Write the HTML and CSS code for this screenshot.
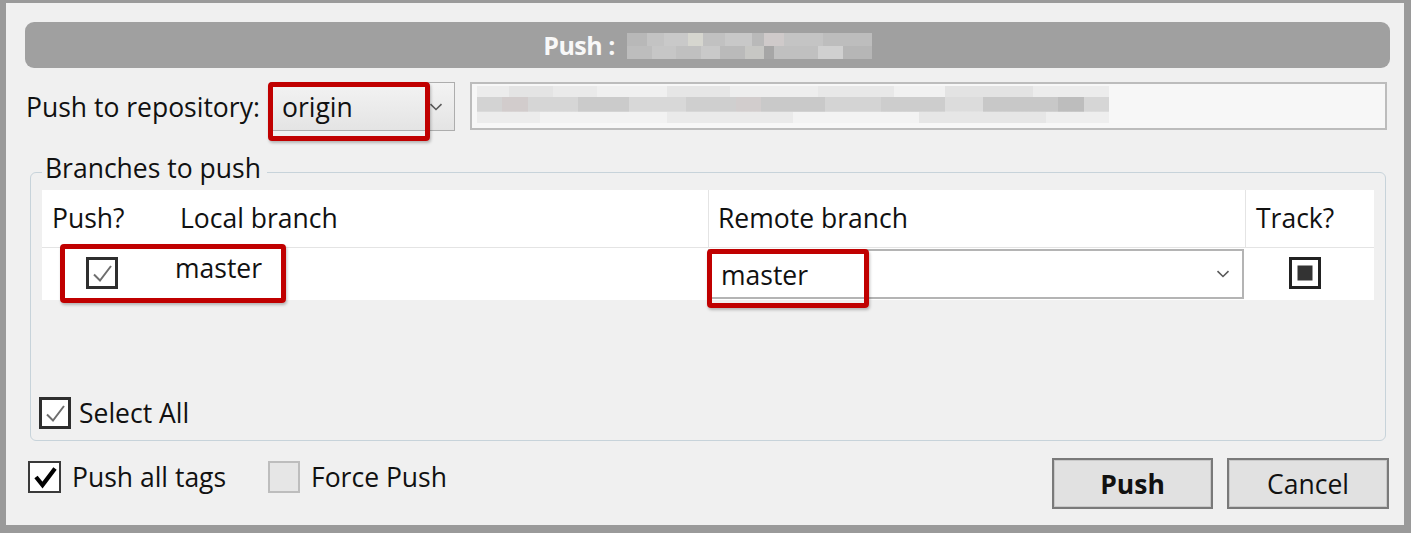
FILE: index.html
```html
<!DOCTYPE html>
<html>
<head>
<meta charset="utf-8">
<title>Push</title>
<link rel="stylesheet" href="styles.css">
</head>
<body>
<div class="window">
  <div class="titlebar">
    <span class="title">Push :</span>
    <span class="blur title-blur"></span>
  </div>

  <div class="repo-row">
    <span class="repo-label">Push to repository:</span>
    <div class="combo repo-combo">
      <span class="combo-text">origin</span>
      <svg class="chevron" width="14" height="8" viewBox="0 0 14 8"><path d="M1.5 1.2 L7 6.5 L12.5 1.2" fill="none" stroke="#5a5a5a" stroke-width="1.6"/></svg>
      <span class="hl hl-repo"></span>
    </div>
    <div class="url-box"><span class="blur url-blur"></span></div>
  </div>

  <fieldset class="group">
    <legend class="group-legend">Branches to push</legend>
    <div class="grid-area">
      <div class="grid grid-head">
        <div class="hcell hc-push">Push?</div>
        <div class="hcell hc-local">Local branch</div>
        <div class="hcell hc-remote">Remote branch</div>
        <div class="hcell hc-track">Track?</div>
      </div>
      <div class="grid grid-row">
        <div class="cell c-push">
          <svg class="cb" width="32" height="32" viewBox="0 0 32 32"><rect x="1.5" y="1.5" width="29" height="29" fill="#fff" stroke="#2e2e2e" stroke-width="3"/><path d="M8 17.5 L14 23.5 L25 9" fill="none" stroke="#6e6e6e" stroke-width="2"/></svg>
        </div>
        <div class="cell c-local">master</div>
        <div class="cell c-remote">
          <div class="remote-combo">
            <span class="combo-text">master</span>
            <svg class="chevron" width="14" height="8" viewBox="0 0 14 8"><path d="M1.5 1.2 L7 6.5 L12.5 1.2" fill="none" stroke="#5a5a5a" stroke-width="1.6"/></svg>
            <span class="hl hl-remote"></span>
          </div>
        </div>
        <div class="cell c-track">
          <svg class="cb" width="32" height="32" viewBox="0 0 32 32"><rect x="1.5" y="1.5" width="29" height="29" fill="#fff" stroke="#222" stroke-width="3"/><rect x="8.5" y="8.5" width="15" height="15" fill="#333"/></svg>
        </div>
        <span class="hl hl-local"></span>
      </div>
    </div>
    <div class="check select-all">
      <svg class="cb" width="32" height="32" viewBox="0 0 32 32"><rect x="1.5" y="1.5" width="29" height="29" fill="#fff" stroke="#2e2e2e" stroke-width="3"/><path d="M8 17.5 L14 23.5 L25 9" fill="none" stroke="#6e6e6e" stroke-width="2"/></svg>
      <span class="check-label">Select All</span>
    </div>
  </fieldset>

  <div class="bottom">
    <div class="options">
      <div class="check opt-tags">
        <svg class="cb" width="33" height="32" viewBox="0 0 33 32"><rect x="1" y="1" width="31" height="30" fill="#fff" stroke="#3a3a3a" stroke-width="2"/><path d="M8 16 L14.5 24 L27 7.5" fill="none" stroke="#000" stroke-width="4.2"/></svg>
        <span class="check-label">Push all tags</span>
      </div>
      <div class="check opt-force">
        <svg class="cb" width="32" height="32" viewBox="0 0 32 32"><rect x="1" y="1" width="30" height="30" fill="#e6e6e6" stroke="#bdbdbd" stroke-width="2"/></svg>
        <span class="check-label">Force Push</span>
      </div>
    </div>
    <div class="buttons">
      <button class="btn btn-push">Push</button>
      <button class="btn btn-cancel">Cancel</button>
    </div>
  </div>
</div>
</body>
</html>
```

FILE: styles.css
```css
html, body {
  margin: 0;
  padding: 0;
  background: #f0f0f0;
}

body {
  font-family: "Open Sans", "Noto Sans", sans-serif;
  font-size: 26.5px;
  color: #111111;
}

.window {
  width: 1411px;
  height: 533px;
  box-sizing: border-box;
  background: #f0f0f0;
  border-style: solid;
  border-color: #9a9a9a;
  border-width: 3px 7px 8px 6px;
  display: flex;
  flex-direction: column;
}

/* title bar */
.titlebar {
  margin: 19px 14px 0 19px;
  height: 46px;
  border-radius: 9px;
  background: #a0a0a0;
  display: flex;
  justify-content: center;
  align-items: center;
  gap: 12px;
}

.title {
  color: #f8f8f8;
  font-weight: 700;
  font-size: 25px;
  line-height: 30px;
  letter-spacing: -0.5px;
}

.blur {
  display: block;
}

.title-blur {
  width: 245px;
  height: 26px;
  margin-top: 2px;
  background:
    linear-gradient(90deg, #b8b8b8 0 8%, #c3c3c3 8% 15%, #c9c9c9 15% 25%, #d6d6cf 25% 31%, #c1c1c1 31% 40%, #c8c8c8 40% 51%, #b9b9b9 51% 56%, #cfcaca 56% 64%, #c4c4c4 64% 80%, #bdbdbd 80% 100%) top / 100% 50% no-repeat,
    linear-gradient(90deg, #bdbdbd 0 10%, #c6c6c6 10% 20%, #c0c0c0 20% 30%, #c9c9c9 30% 38%, #bababa 38% 48%, #c7c7c4 48% 56%, #a6a6a6 56% 60%, #c0c0c0 60% 78%, #d0d0d0 78% 88%, #b6b6b6 88% 100%) bottom / 100% 50% no-repeat;
}

/* repository row */
.repo-row {
  margin: 14px 17px 0 20px;
  height: 50px;
  display: flex;
  align-items: flex-start;
}

.repo-label {
  flex: 0 0 244px;
  line-height: 50px;
  white-space: nowrap;
}

.combo {
  position: relative;
  box-sizing: border-box;
  height: 49px;
  border: 1px solid #adadad;
  background: linear-gradient(#f3f3f3, #e4e4e4);
  display: flex;
  align-items: center;
}

.repo-combo {
  flex: 0 0 185px;
  margin-right: 15px;
}

.combo-text {
  padding-left: 11px;
  line-height: 30px;
  flex: 1;
}

.chevron {
  display: block;
  margin-right: 11px;
}

.url-box {
  flex: 1;
  box-sizing: border-box;
  height: 48px;
  border: 2px solid #bcbcbc;
  background: #f7f7f7;
  padding: 2px 0 0 5px;
}

.url-blur {
  width: 632px;
  height: 37px;
  background:
    linear-gradient(90deg, #ececec 0 5%, #e4e4e4 5% 12%, #eaeaea 12% 19%, #f0f0f0 19% 30%, #e6e6e6 30% 40%, #eeeeee 40% 54%, #e8e8e8 54% 66%, #f1f1f1 66% 74%, #e3e3e3 74% 88%, #ececec 88% 100%) top / 100% 30% no-repeat,
    linear-gradient(90deg, #d3d3d3 0 4%, #d2cccc 4% 8%, #d6d6d6 8% 16%, #cbcbcb 16% 24%, #d8d8d8 24% 33%, #cfcfcf 33% 41%, #d2cdcd 41% 45%, #c9c9c9 45% 55%, #d4d4d4 55% 64%, #cdcdcd 64% 74%, #dcdcdc 74% 80%, #c8c8c8 80% 92%, #bdbdbd 92% 96%, #d6d6d6 96% 100%) center / 100% 40% no-repeat,
    linear-gradient(90deg, #ececec 0 10%, #f2f2f2 10% 30%, #eaeaea 30% 50%, #f3f3f3 50% 70%, #e6e6e6 70% 90%, #eeeeee 90% 100%) bottom / 100% 30% no-repeat;
}

/* red highlight frames */
.hl {
  position: absolute;
  box-sizing: border-box;
  border: 5px solid #c00000;
  border-radius: 4px;
  box-shadow: 1px 2px 3px rgba(0, 0, 0, 0.25);
  pointer-events: none;
}

.hl-repo {
  left: -3px;
  top: -1px;
  width: 162px;
  height: 59px;
}

.hl-local {
  left: 18px;
  top: -4px;
  width: 226px;
  height: 59px;
}

.hl-remote {
  left: -3px;
  top: -2px;
  width: 162px;
  height: 59px;
}

/* group box */
.group {
  margin: 22px 18px 0 24px;
  padding: 0 11px 11px 11px;
  border: 1px solid #c7d3da;
  border-radius: 6px;
  min-width: 0;
}

.group-legend {
  padding: 0 6px 8px 3px;
  line-height: 28px;
}

.grid-area {
  height: 207px;
}

.grid {
  display: grid;
  grid-template-columns: 123px 543px 537px 1fr;
  background: #ffffff;
}

.grid-head {
  border-bottom: 1px solid #e4e4e4;
  box-sizing: border-box;
  height: 58px;
}

.hcell {
  display: flex;
  align-items: center;
  line-height: 30px;
  padding-bottom: 2px;
}

.hc-push { padding-left: 10px; }
.hc-local { padding-left: 15px; }
.hc-remote { padding-left: 9px; border-left: 1px solid #e4e4e4; }
.hc-track { padding-left: 10px; border-left: 1px solid #e4e4e4; }

.grid-row {
  position: relative;
  height: 52px;
}

.cell {
  box-sizing: border-box;
}

.cb {
  display: block;
  flex: none;
}

.c-push {
  padding: 9px 0 0 44px;
}

.c-local {
  padding: 5px 0 0 10px;
  line-height: 30px;
}

.c-remote {
  padding-top: 1px;
}

.remote-combo {
  position: relative;
  box-sizing: border-box;
  height: 50px;
  width: 536px;
  border: 2px solid #b4b4b4;
  background: #ffffff;
  display: flex;
  align-items: center;
}

.remote-combo .combo-text {
  padding-left: 11px;
  padding-top: 2px;
}

.remote-combo .chevron {
  margin-right: 12px;
}

.c-track {
  padding: 9px 0 0 44px;
}

/* checkboxes with labels */
.check {
  display: flex;
  align-items: center;
}

.check-label {
  line-height: 32px;
  white-space: nowrap;
}

.select-all {
  margin-left: -3px;
  gap: 8px;
}

/* bottom row */
.bottom {
  margin: 17px 15px 0 22px;
  display: flex;
  justify-content: space-between;
  align-items: flex-start;
}

.options {
  display: flex;
  margin-top: 3px;
}

.opt-tags {
  width: 240px;
  gap: 11px;
}

.opt-force {
  gap: 11px;
}

.buttons {
  display: flex;
  gap: 14px;
}

.btn {
  box-sizing: border-box;
  width: 161px;
  height: 51px;
  border: 2px solid #7a7a7a;
  box-shadow: inset 0 0 0 1px #c9c9c9;
  background: #e1e1e1;
  font-family: "Open Sans", "Noto Sans", sans-serif;
  font-size: 26.5px;
  color: #111111;
  padding: 0;
  line-height: 30px;
}

.btn-push {
  font-weight: 700;
}

.btn-cancel {
  width: 162px;
}
```
